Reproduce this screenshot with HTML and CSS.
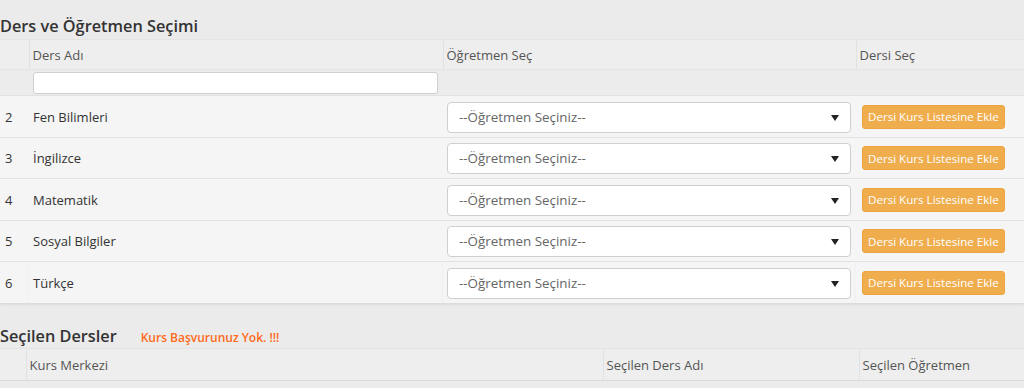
FILE: index.html
```html
<!DOCTYPE html>
<html lang="tr">
<head>
<meta charset="utf-8">
<link rel="stylesheet" href="styles.css">
</head>
<body>
<div class="page">
  <h3 class="title">Ders ve Öğretmen Seçimi</h3>
  <table class="grid lessons">
    <colgroup><col class="c-num"><col class="c-name"><col class="c-teacher"><col class="c-action"></colgroup>
    <thead>
      <tr class="head"><th></th><th>Ders Adı</th><th>Öğretmen Seç</th><th>Dersi Seç</th></tr>
      <tr class="filter"><th></th><th><input type="text" class="filter-input"></th><th></th><th></th></tr>
    </thead>
    <tbody>
      <tr><td>2</td><td>Fen Bilimleri</td><td><div class="select">--Öğretmen Seçiniz--<span class="caret"></span></div></td><td><button class="btn">Dersi Kurs Listesine Ekle</button></td></tr>
      <tr><td>3</td><td>İngilizce</td><td><div class="select">--Öğretmen Seçiniz--<span class="caret"></span></div></td><td><button class="btn">Dersi Kurs Listesine Ekle</button></td></tr>
      <tr><td>4</td><td>Matematik</td><td><div class="select">--Öğretmen Seçiniz--<span class="caret"></span></div></td><td><button class="btn">Dersi Kurs Listesine Ekle</button></td></tr>
      <tr><td>5</td><td>Sosyal Bilgiler</td><td><div class="select">--Öğretmen Seçiniz--<span class="caret"></span></div></td><td><button class="btn">Dersi Kurs Listesine Ekle</button></td></tr>
      <tr><td>6</td><td>Türkçe</td><td><div class="select">--Öğretmen Seçiniz--<span class="caret"></span></div></td><td><button class="btn">Dersi Kurs Listesine Ekle</button></td></tr>
    </tbody>
  </table>

  <div class="title-row">
    <h3 class="title">Seçilen Dersler</h3>
    <span class="warn">Kurs Başvurunuz Yok. !!!</span>
  </div>
  <table class="grid selected">
    <colgroup><col class="s-num"><col class="s-center"><col class="s-lesson"><col class="s-teacher"></colgroup>
    <thead>
      <tr class="head"><th></th><th>Kurs Merkezi</th><th>Seçilen Ders Adı</th><th>Seçilen Öğretmen</th></tr>
    </thead>
    <tbody>
      <tr class="empty"><td></td><td></td><td></td><td></td></tr>
    </tbody>
  </table>
</div>
</body>
</html>
```

FILE: styles.css
```css
* { box-sizing: border-box; }
html, body { margin: 0; padding: 0; }
body {
  background: #ebebeb;
  font-family: "Open Sans", "Noto Sans", sans-serif;
  font-size: 13px;
  color: #333;
}
.page { padding-top: 15px; }
.title {
  margin: 0 0 2px 0;
  font-size: 16.3px;
  font-weight: 600;
  color: #333;
  line-height: 22px;
}
.grid {
  width: 100%;
  border-collapse: collapse;
  table-layout: fixed;
}
.lessons .c-num { width: 29px; }
.lessons .c-name { width: 414px; }
.lessons .c-teacher { width: 413px; }
.lessons .c-action { width: 168px; }
.grid th {
  text-align: left;
  font-weight: 400;
  color: #555;
  padding: 0 3px;
  border-left: 1px solid #e2e2e2;
}
.grid th:first-child { border-left: none; }
.head th {
  height: 30px;
  background: #eeeeee;
  border-top: 1px solid #e4e4e4;
}
.filter th {
  height: 26px;
  background: #ececec;
  border-left: none;
  border-top: 1px solid #e4e4e4;
}
.filter-input {
  display: block;
  width: 405px;
  height: 22px;
  margin-left: 1px;
  border: 1px solid #d0d0d0;
  border-radius: 3px;
  background: #fff;
}
.grid td {
  background: #f5f5f5;
  border-top: 1px solid #e2e2e2;
  padding: 0 4px;
  vertical-align: middle;
  color: #333;
}
.lessons tbody tr:nth-child(odd) td { height: 42px; }
.lessons tbody tr:nth-child(even) td { height: 41px; }
.lessons td:first-child { padding-left: 5px; }
.lessons td:nth-child(3) { padding: 1px 5px 0 4px; }
.lessons td:nth-child(4) { padding-left: 6px; }
.lessons tbody tr:last-child td {
  border-bottom: 1px solid #dcdcdc;
  box-shadow: 0 1px 2px rgba(0,0,0,0.06);
}
.select {
  position: relative;
  height: 31px;
  line-height: 29px;
  border: 1px solid #cfcfcf;
  border-radius: 4px;
  background: #fff;
  padding-left: 11px;
  color: #666;
  font-size: 13.4px;
}
.caret {
  position: absolute;
  right: 11px;
  top: 12px;
  width: 0; height: 0;
  border-left: 4px solid transparent;
  border-right: 4px solid transparent;
  border-top: 6px solid #222;
}
.btn {
  display: block;
  height: 24px;
  padding: 0 5px;
  background: #f0ad4e;
  border: 1px solid #eea43c;
  border-radius: 3px;
  color: #fff;
  font-family: inherit;
  font-size: 11.6px;
  white-space: nowrap;
}
.title-row {
  display: flex;
  align-items: baseline;
  margin-top: 21px;
}
.title-row .title { margin: 0; }
.warn {
  margin-left: 24px;
  color: #ff6a1a;
  font-weight: 600;
  font-size: 12px;
}
.selected { margin-top: 1px; }
.selected .s-num { width: 26px; }
.selected .s-center { width: 577px; }
.selected .s-lesson { width: 256px; }
.selected .s-teacher { width: 165px; }
.selected .head th { height: 32px; border-bottom: 1px solid #dcdcdc; }
.selected .empty td { height: 20px; background: #ececec; border-top: 1px solid #f8f8f8; }
```
